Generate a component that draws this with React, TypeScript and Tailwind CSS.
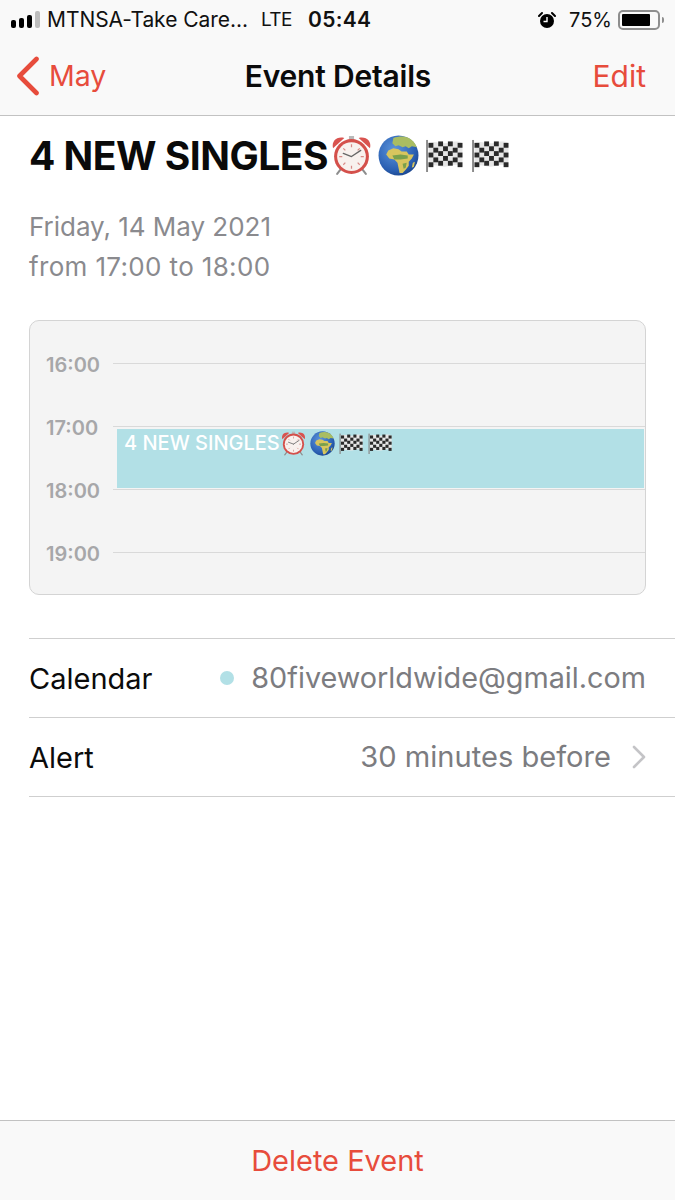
import React from "react";

function ClockEmoji({ s }: { s: number }) {
  return (
    <svg width={s} height={s} viewBox="0 0 40 40" className="shrink-0">
      <path d="M9 34l-3 4M31 34l3 4" stroke="#8d8d8d" strokeWidth="2" strokeLinecap="round" />
      <rect x="17.5" y="1" width="5" height="4" fill="#b9b9b9" />
      <path d="M2 13C0 6 6 1 13 3z" fill="#d9534f" />
      <path d="M38 13C40 6 34 1 27 3z" fill="#d9534f" />
      <circle cx="20" cy="21" r="17" fill="#d4504b" />
      <circle cx="20" cy="21" r="14" fill="#f8f1ee" />
      <path d="M20 9v3M20 30v3M8 21h3M29 21h3M12 13l2 2M28 13l-2 2M12 29l2-2M28 29l-2-2" stroke="#d88a86" strokeWidth="1.2" />
      <path d="M20 21l-8-3M20 21l9-6" stroke="#666" strokeWidth="1.3" strokeLinecap="round" />
    </svg>
  );
}

function GlobeEmoji({ s }: { s: number }) {
  return (
    <svg width={s} height={s} viewBox="0 0 40 40" className="shrink-0">
      <defs>
        <radialGradient id="ocean" cx="0.4" cy="0.35" r="0.75">
          <stop offset="0" stopColor="#5c95dc" />
          <stop offset="0.7" stopColor="#2a5fb2" />
          <stop offset="1" stopColor="#153c80" />
        </radialGradient>
      </defs>
      <circle cx="20" cy="20" r="19.5" fill="url(#ocean)" />
      <path d="M15 3c5-2 11-2 15 0 4 2 6 5 8 9l-5-1-3 2-3-2-3 1-4-2-3 1-3-3z" fill="#a9bd62" />
      <path d="M10 15l5-2 5 1 3 2 5 0 2 3 5 0-2 4-3 3 0 4-3 4-3 3-3 0-1-5-1-5-3-3-5-1-3-4z" fill="#d8c55e" />
      <path d="M14 20l8-1 7 1 0 3-7 1-6 0zM24 28l4-1-1 5-2 1z" fill="#7aa04c" />
      <path d="M34 27l2-1-1 5-2 1z" fill="#d8c55e" />
    </svg>
  );
}

function FlagEmoji({ w, h }: { w: number; h: number }) {
  const cells: React.ReactElement[] = [];
  for (let r = 0; r < 5; r++) {
    for (let c = 0; c < 7; c++) {
      if ((r + c) % 2 === 0) {
        cells.push(<rect key={`${r}-${c}`} x={3 + c * 5} y={4 + r * 5 + (c < 2 || c > 4 ? 0 : -1.5)} width={5} height={5} fill="#2a2a2a" />);
      }
    }
  }
  return (
    <svg width={w} height={h} viewBox="0 0 40 34" className="shrink-0">
      <rect x="0.5" y="1" width="2" height="33" fill="#8b8b8b" />
      <path d="M3 4c8-3 12 2 20 0s10-2 15 0v24c-5-2-8-2-15 0s-12-3-20 0z" fill="#e6e6e6" />
      {cells}
    </svg>
  );
}

function Hour({ t }: { t: string }) {
  return (
    <div className="flex items-center h-[63px]">
      <span className="w-[83px] pl-[16px] pt-[2px] text-[20px] font-semibold text-[#a7a7a9] leading-none">{t}</span>
      <div className="flex-1 h-px bg-[#d9d9d9]" />
    </div>
  );
}

export default function App() {
  return (
    <div className="w-[675px] h-[1200px] bg-white flex flex-col overflow-hidden text-black" style={{ fontFamily: 'Inter, "Liberation Sans", sans-serif' }}>
      <header className="h-[116px] shrink-0 bg-[#f9f9f9] border-b border-[#c2c2c2] flex flex-col">
        <div className="h-[38px] flex items-center pl-[11px] pr-[11px] pt-[1px]">
          <div className="flex items-end gap-[3px] h-[17px]">
            <span className="w-[5px] h-[8px] rounded-[2px] bg-black" />
            <span className="w-[5px] h-[10px] rounded-[2px] bg-black" />
            <span className="w-[5px] h-[13px] rounded-[2px] bg-black" />
            <span className="w-[5px] h-[17px] rounded-[2px] bg-[#bdbdbd]" />
          </div>
          <span className="ml-[7px] text-[21px] leading-none text-[#111] tracking-[-0.05px]">MTNSA-Take Care...</span>
          <span className="ml-[13px] text-[19px] leading-none text-[#111] tracking-[-0.5px]">LTE</span>
          <span className="ml-[16px] text-[21px] leading-none font-semibold text-[#111] tracking-[0.3px]">05:44</span>
          <svg width="18" height="18" viewBox="0 0 18 18" className="ml-auto">
            <circle cx="9" cy="10" r="7" fill="#000" />
            <path d="M9 6v4.5H5.5" stroke="#fff" strokeWidth="1.4" fill="none" />
            <path d="M1 5l3-3M17 5l-3-3" stroke="#000" strokeWidth="2" strokeLinecap="round" />
          </svg>
          <span className="ml-[13px] text-[20px] leading-none text-[#111]">75%</span>
          <div className="ml-[6px] w-[42px] h-[20px] border-2 border-[#8e8e8e] rounded-[5px] p-[2px]">
            <div className="w-[28px] h-full bg-black rounded-[1px]" />
          </div>
          <div className="ml-[2px] w-[2px] h-[6px] bg-[#8e8e8e] rounded-r-[2px]" />
        </div>
        <div className="flex-1 flex items-center relative pl-[16px] pr-[29px] pb-[1px]">
          <svg width="24" height="40" viewBox="0 0 24 40" fill="none" className="shrink-0">
            <path d="M20.5 3L3.5 20l17 17" stroke="#e74c3c" strokeWidth="4.6" strokeLinecap="round" strokeLinejoin="round" />
          </svg>
          <span className="ml-[9px] text-[28.5px] leading-none text-[#e74c3c]">May</span>
          <span className="flex-1 text-center pr-[23px] text-[30px] leading-none font-semibold tracking-[-0.2px] text-[#0b0b0b]">Event Details</span>
          <span className="text-[30px] leading-none text-[#e74c3c]">Edit</span>
        </div>
      </header>

      <main className="flex-1 flex flex-col">
        <div className="pl-[29px] mt-[16px] flex items-center h-[46px]">
          <h1 className="text-[39px] leading-none font-bold tracking-[-0.5px] text-[#0a0a0a]">4 NEW SINGLES</h1>
          <div className="flex items-center gap-[6px] ml-[3px]">
            <ClockEmoji s={41} />
            <GlobeEmoji s={41} />
            <FlagEmoji w={40} h={33} />
            <FlagEmoji w={40} h={33} />
          </div>
        </div>

        <div className="pl-[29px] mt-[29px] text-[26px] leading-[40px] text-[#8a8a8e]">
          <div className="tracking-[-0.03px]">Friday, 14 May 2021</div>
          <div className="tracking-[0.35px]">from 17:00 to 18:00</div>
        </div>

        <div className="mx-[29px] mt-[33px] h-[275px] rounded-[10px] border border-[#d4d4d4] bg-[#f4f4f4] relative overflow-hidden">
          <div className="pt-[11px]">
            <Hour t="16:00" />
            <Hour t="17:00" />
            <Hour t="18:00" />
            <Hour t="19:00" />
          </div>
          <div className="absolute left-[87px] right-[1px] top-[108px] h-[59px] bg-[#b2e0e6] pl-[7px] pt-[1px] flex items-start">
            <span className="text-[20px] leading-[26px] font-medium text-white">4 NEW SINGLES</span>
            <div className="flex items-center gap-[4px] mt-[1px] ml-[1px]">
              <ClockEmoji s={25} />
              <GlobeEmoji s={25} />
              <FlagEmoji w={25} h={21} />
              <FlagEmoji w={25} h={21} />
            </div>
          </div>
        </div>

        <div className="ml-[29px] mt-[43px] border-t border-[#cfcfcf]">
          <div className="h-[79px] border-b border-[#cfcfcf] flex items-center pr-[29px]">
            <span className="text-[29px] leading-none text-[#0b0b0b]">Calendar</span>
            <span className="ml-auto w-[14px] h-[14px] rounded-full bg-[#b2e0e6]" />
            <span className="ml-[17px] text-[28.8px] leading-none text-[#7c7c80]">80fiveworldwide@gmail.com</span>
          </div>
          <div className="h-[79px] border-b border-[#cfcfcf] flex items-center pr-[29px]">
            <span className="text-[29px] leading-none text-[#0b0b0b]">Alert</span>
            <span className="ml-auto text-[29.1px] leading-none text-[#7c7c80]">30 minutes before</span>
            <svg width="14" height="24" viewBox="0 0 14 24" fill="none" className="ml-[21px]">
              <path d="M2 2l10 10L2 22" stroke="#c4c4c7" strokeWidth="2.6" strokeLinecap="round" strokeLinejoin="round" />
            </svg>
          </div>
        </div>
      </main>

      <footer className="h-[80px] shrink-0 bg-[#f9f9f9] border-t border-[#c2c2c2] flex items-center justify-center">
        <span className="text-[29px] leading-none text-[#e74c3c]">Delete Event</span>
      </footer>
    </div>
  );
}
